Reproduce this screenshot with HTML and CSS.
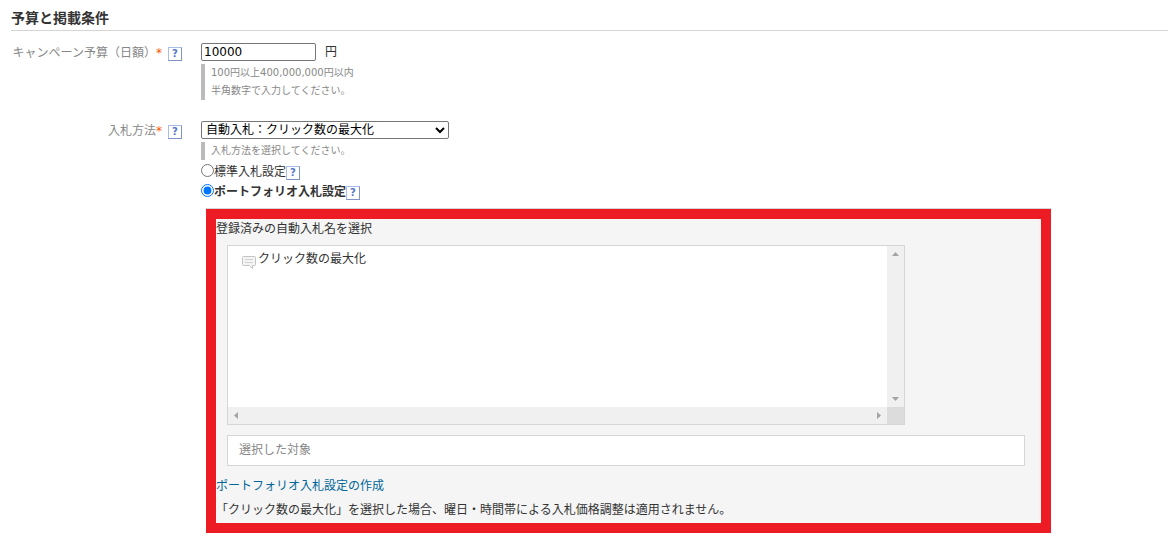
FILE: index.html
```html
<!DOCTYPE html>
<html lang="ja">
<head>
  <meta charset="UTF-8">
  <title>予算と掲載条件</title>
  <link rel="stylesheet" href="styles.css">
</head>
<body>
  <form class="settings">
    <h2 class="title">予算と掲載条件</h2>

    <div class="row">
      <div class="row-label">
        <label for="budget">キャンペーン予算（日額）<span class="required">*</span></label>
        <a class="help" href="#">?</a>
      </div>
      <div class="row-body">
        <div class="field">
          <input class="budget" type="text" id="budget" value="10000">
          <span>円</span>
        </div>
        <p class="hint">100円以上400,000,000円以内<br>半角数字で入力してください。</p>
      </div>
    </div>

    <div class="row">
      <div class="row-label">
        <label for="method">入札方法<span class="required">*</span></label>
        <a class="help" href="#">?</a>
      </div>
      <div class="row-body">
        <div class="field">
          <select class="method" id="method">
            <option>自動入札：クリック数の最大化</option>
          </select>
        </div>
        <p class="hint">入札方法を選択してください。</p>
        <div class="choice">
          <input type="radio" name="type" id="standard">
          <label for="standard">標準入札設定</label>
          <a class="help" href="#">?</a>
        </div>
        <div class="choice">
          <input type="radio" name="type" id="portfolio" checked>
          <label class="selected" for="portfolio">ポートフォリオ入札設定</label>
          <a class="help" href="#">?</a>
        </div>

        <div class="panel">
          <p>登録済みの自動入札名を選択</p>
          <div class="list">
            <ul class="list-items">
              <li>
                <svg class="bubble" width="14" height="14" viewBox="0 0 14 14">
                  <path d="M1.5 1.5h11q1 0 1 1v7q0 1-1 1h-2v3l-3-3h-6q-1 0-1-1v-7q0-1 1-1z" fill="#f4f4f4" stroke="#c4c4c4"/>
                  <path d="M3 4.5h8M3 7.5h8" stroke="#d2d2d2"/>
                </svg>
                クリック数の最大化
              </li>
            </ul>
            <div class="bar bar-y">
              <svg width="7" height="4" viewBox="0 0 7 4"><path d="M0 4L3.5 0L7 4z"/></svg>
              <svg width="7" height="4" viewBox="0 0 7 4"><path d="M0 0L3.5 4L7 0z"/></svg>
            </div>
            <div class="bar bar-x">
              <svg width="4" height="7" viewBox="0 0 4 7"><path d="M4 0L0 3.5L4 7z"/></svg>
              <svg width="4" height="7" viewBox="0 0 4 7"><path d="M0 0L4 3.5L0 7z"/></svg>
            </div>
            <div class="corner"></div>
          </div>
          <div class="target">選択した対象</div>
          <p><a class="create" href="#">ポートフォリオ入札設定の作成</a></p>
          <p class="note">「クリック数の最大化」を選択した場合、曜日・時間帯による入札価格調整は適用されません。</p>
        </div>
      </div>
    </div>
  </form>
</body>
</html>
```
FILE: styles.css
```css
* {
  box-sizing: border-box;
}

body {
  margin: 0;
  font-family: "DejaVu Sans", "Noto Sans CJK JP", sans-serif;
  font-size: 12px;
  line-height: 20px;
  color: #333;
  background: white;
}

p, ul {
  margin: 0;
  padding: 0;
}

input, select {
  margin: 0;
  font: inherit;
  color: #000;
}

.settings {
  padding: 8px 0 0 11px;
}

.title {
  margin: 0 0 11px;
  padding-bottom: 2px;
  border-bottom: 1px solid #d5d5d5;
  font-size: 14px;
}

.row {
  display: grid;
  grid-template-columns: 171px 1fr;
  gap: 19px;
  margin-bottom: 20px;
}

.row-label {
  display: flex;
  justify-content: flex-end;
  align-items: flex-start;
  gap: 6px;
  padding-top: 1px;
  color: #888;
  white-space: nowrap;
}

.row-label .help {
  margin-top: 4px;
}

.required {
  color: #f50;
}

.help {
  width: 14px;
  height: 14px;
  border: 1px solid #a9bde8;
  border-right-color: #7f93c4;
  border-bottom-color: #7f93c4;
  background: white;
  color: #5577c8;
  font-size: 10px;
  font-weight: bold;
  line-height: 12px;
  text-align: center;
  text-decoration: none;
}

.field {
  display: flex;
  align-items: center;
  gap: 9px;
  height: 20px;
}

.budget {
  width: 115px;
  height: 18px;
  padding: 0 2px;
  border: 1px solid #767676;
  border-radius: 2px;
}

.method {
  width: 248px;
  height: 18px;
  padding: 0;
  border: 1px solid #767676;
  border-radius: 2px;
  background-color: white;
  line-height: 16px;
}

.hint {
  margin-top: 2px;
  padding-left: 6px;
  border-left: 4px solid #bbb;
  color: #888;
  font-size: 10px;
  line-height: 18px;
}

.choice {
  display: flex;
  align-items: center;
  height: 20px;
}

.choice label {
  padding-top: 3px;
}

.choice .help {
  align-self: flex-end;
}

.selected {
  font-weight: bold;
}

.panel {
  max-width: 845px;
  margin: 9px 0 0 5px;
  padding-bottom: 3px;
  border: 10px solid #ed1c24;
  background: #f5f5f5;
  box-shadow: 0 -1px 0 #d5d5d5;
}

.list {
  display: grid;
  grid-template-columns: 1fr 17px;
  grid-template-rows: 161px 17px;
  max-width: 678px;
  margin: 6px 11px 10px;
  border: 1px solid #d5d5d5;
}

.list-items {
  padding: 3px 14px;
  background: white;
  list-style: none;
}

.list-items li {
  display: flex;
  align-items: flex-end;
  gap: 2px;
}

.bar {
  display: flex;
  justify-content: space-between;
  align-items: center;
  padding: 6px;
  background: #f0f0f0;
  fill: #a3a3a3;
}

.bar-y {
  flex-direction: column;
}

.corner {
  background: #dcdcdc;
}

.target {
  max-width: 798px;
  margin: 0 11px 10px;
  padding: 4px 11px 5px;
  border: 1px solid #d5d5d5;
  background: white;
  color: #888;
}

.create {
  color: #069;
  text-decoration: none;
}

.note {
  margin-top: 4px;
}
```
